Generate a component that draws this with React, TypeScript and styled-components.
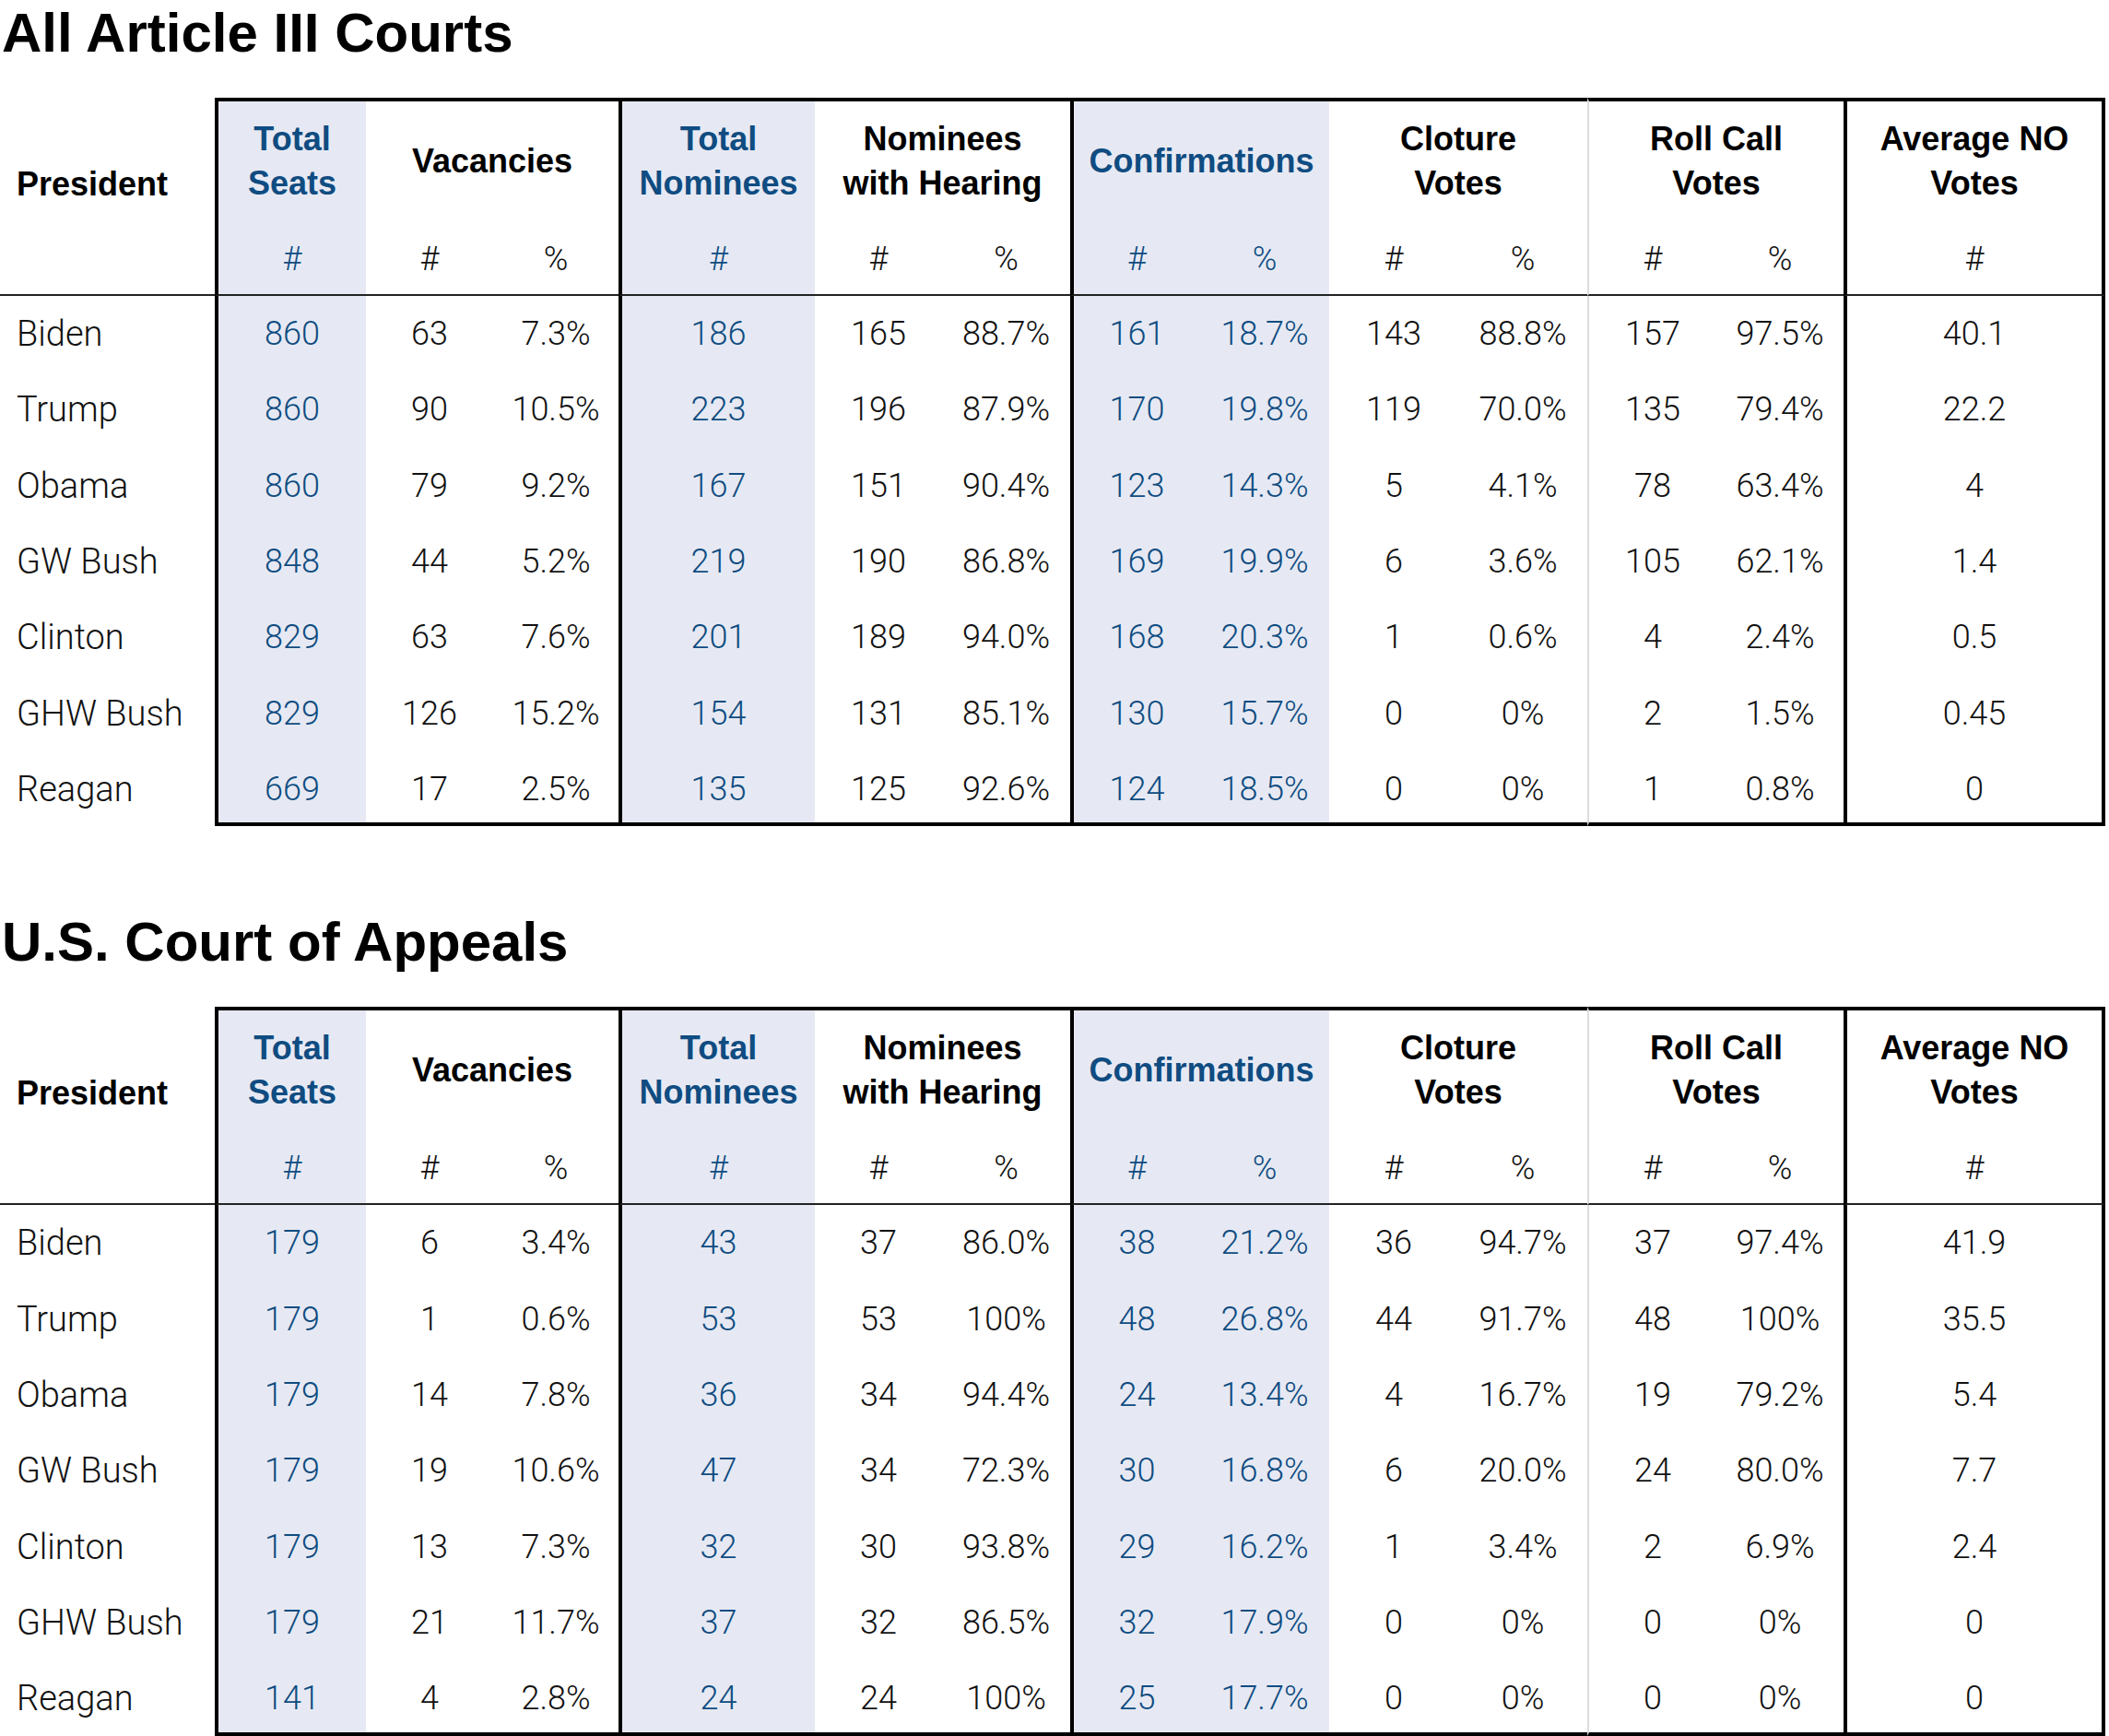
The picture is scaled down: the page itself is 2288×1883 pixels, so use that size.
import React from 'react'
import styled, { createGlobalStyle } from 'styled-components'

type Edge = 'thick' | 'light'

type Column = {
    shaded?: boolean
    edge?: Edge
    closing?: boolean
}

type Group = {
    label: string[]
    span: number
}

type Row = {
    name: string
    values: (string | number)[]
}

const COLUMNS: Column[] = [
    { shaded: true, edge: 'thick' },
    {},
    {},
    { shaded: true, edge: 'thick' },
    {},
    {},
    { shaded: true, edge: 'thick' },
    { shaded: true },
    {},
    {},
    { edge: 'light' },
    {},
    { edge: 'thick', closing: true },
]

const GROUPS: Group[] = [
    { label: ['Total', 'Seats'], span: 1 },
    { label: ['Vacancies'], span: 2 },
    { label: ['Total', 'Nominees'], span: 1 },
    { label: ['Nominees', 'with Hearing'], span: 2 },
    { label: ['Confirmations'], span: 2 },
    { label: ['Cloture', 'Votes'], span: 2 },
    { label: ['Roll Call', 'Votes'], span: 2 },
    { label: ['Average NO', 'Votes'], span: 1 },
]

const UNITS = ['#', '#', '%', '#', '#', '%', '#', '%', '#', '%', '#', '%', '#']

const ALL_COURTS: Row[] = [
    { name: 'Biden', values: [860, 63, '7.3%', 186, 165, '88.7%', 161, '18.7%', 143, '88.8%', 157, '97.5%', '40.1'] },
    { name: 'Trump', values: [860, 90, '10.5%', 223, 196, '87.9%', 170, '19.8%', 119, '70.0%', 135, '79.4%', '22.2'] },
    { name: 'Obama', values: [860, 79, '9.2%', 167, 151, '90.4%', 123, '14.3%', 5, '4.1%', 78, '63.4%', '4'] },
    { name: 'GW Bush', values: [848, 44, '5.2%', 219, 190, '86.8%', 169, '19.9%', 6, '3.6%', 105, '62.1%', '1.4'] },
    { name: 'Clinton', values: [829, 63, '7.6%', 201, 189, '94.0%', 168, '20.3%', 1, '0.6%', 4, '2.4%', '0.5'] },
    { name: 'GHW Bush', values: [829, 126, '15.2%', 154, 131, '85.1%', 130, '15.7%', 0, '0%', 2, '1.5%', '0.45'] },
    { name: 'Reagan', values: [669, 17, '2.5%', 135, 125, '92.6%', 124, '18.5%', 0, '0%', 1, '0.8%', '0'] },
]

const APPEALS: Row[] = [
    { name: 'Biden', values: [179, 6, '3.4%', 43, 37, '86.0%', 38, '21.2%', 36, '94.7%', 37, '97.4%', '41.9'] },
    { name: 'Trump', values: [179, 1, '0.6%', 53, 53, '100%', 48, '26.8%', 44, '91.7%', 48, '100%', '35.5'] },
    { name: 'Obama', values: [179, 14, '7.8%', 36, 34, '94.4%', 24, '13.4%', 4, '16.7%', 19, '79.2%', '5.4'] },
    { name: 'GW Bush', values: [179, 19, '10.6%', 47, 34, '72.3%', 30, '16.8%', 6, '20.0%', 24, '80.0%', '7.7'] },
    { name: 'Clinton', values: [179, 13, '7.3%', 32, 30, '93.8%', 29, '16.2%', 1, '3.4%', 2, '6.9%', '2.4'] },
    { name: 'GHW Bush', values: [179, 21, '11.7%', 37, 32, '86.5%', 32, '17.9%', 0, '0%', 0, '0%', '0'] },
    { name: 'Reagan', values: [141, 4, '2.8%', 24, 24, '100%', 25, '17.7%', 0, '0%', 0, '0%', '0'] },
]

// first column index of each group, so a group header takes its look from there
const groupStarts = GROUPS.reduce<number[]>((acc, g, i) => {
    acc.push(i === 0 ? 0 : acc[i - 1] + GROUPS[i - 1].span)
    return acc
}, [])

const CourtTable = ({ rows }: { rows: Row[] }) => {
    return (
        <Grid>
            <PresidentHead>President</PresidentHead>
            {GROUPS.map((g, i) => {
                const first = COLUMNS[groupStarts[i]]
                const last = COLUMNS[groupStarts[i] + g.span - 1]
                return (
                    <Cell
                        key={g.label.join()}
                        $span={g.span}
                        $shaded={first.shaded}
                        $edge={first.edge}
                        $closing={last.closing}
                        $top
                    >
                        <GroupLabel $blue={first.shaded}>
                            {g.label.map(line => <div key={line}>{line}</div>)}
                        </GroupLabel>
                    </Cell>
                )
            })}
            {UNITS.map((u, i) => (
                <Cell
                    key={'unit' + i}
                    $shaded={COLUMNS[i].shaded}
                    $edge={COLUMNS[i].edge}
                    $closing={COLUMNS[i].closing}
                    $rule="thin"
                >
                    <Unit $blue={COLUMNS[i].shaded}>{u}</Unit>
                </Cell>
            ))}
            {rows.map((row, r) => {
                const isLast = r === rows.length - 1
                return (
                    <React.Fragment key={row.name}>
                        <NameCell>{row.name}</NameCell>
                        {row.values.map((v, i) => (
                            <Cell
                                key={i}
                                $shaded={COLUMNS[i].shaded}
                                $edge={COLUMNS[i].edge}
                                $closing={COLUMNS[i].closing}
                                $rule={isLast ? 'thick' : undefined}
                            >
                                <Value $blue={COLUMNS[i].shaded}>{v}</Value>
                            </Cell>
                        ))}
                    </React.Fragment>
                )
            })}
        </Grid>
    )
}

const App = () => {
    return (
        <Page>
            <GlobalStyle />
            <Section>
                <Title>All Article III Courts</Title>
                <CourtTable rows={ALL_COURTS} />
            </Section>
            <Section>
                <Title>U.S. Court of Appeals</Title>
                <CourtTable rows={APPEALS} />
            </Section>
        </Page>
    )
}

export default App

const HEAD_FONT = `"Liberation Sans", Arial, sans-serif`
const BODY_FONT = `Roboto, "Liberation Sans", sans-serif`
const BLUE = '#0f4c81'
const SHADE = '#e6e9f3'

const GlobalStyle = createGlobalStyle`
    html, body {
        margin: 0;
        padding: 0;
        background: #fff;
    }
    body {
        width: 2288px;
        height: 1883px;
        overflow: hidden;
    }
`

const Page = styled.div`
    display: flex;
    flex-direction: column;
    gap: 90px;
    width: 2288px;
`

const Section = styled.section`
    display: flex;
    flex-direction: column;
    gap: 34px;
`

const Title = styled.h1`
    margin: 0;
    padding-left: 2px;
    font-family: ${HEAD_FONT};
    font-size: 60px;
    font-weight: 700;
    line-height: 72px;
    color: #000;
`

const Grid = styled.div`
    display: grid;
    grid-template-columns: 233px 164px 138px 136px 213px 138px 139px 141px 140px 140px 140px 140px 138px 284px;
    grid-template-rows: 131px 84px repeat(6, 82.3px) 81.5px;
`

const Cell = styled.div<{
    $span?: number
    $shaded?: boolean
    $edge?: Edge
    $closing?: boolean
    $top?: boolean
    $rule?: 'thin' | 'thick'
}>`
    box-sizing: border-box;
    grid-column: span ${p => p.$span ?? 1};
    display: flex;
    align-items: center;
    justify-content: center;
    text-align: center;
    padding-top: ${p => (p.$rule === 'thick' ? '4px' : '0')};
    background: ${p => (p.$shaded ? SHADE : '#fff')};
    border-left: ${p => (p.$edge === 'thick' ? '4px solid #000' : p.$edge === 'light' ? '2px solid #dcdcdc' : 'none')};
    border-right: ${p => (p.$closing ? '4px solid #000' : 'none')};
    border-top: ${p => (p.$top ? '4px solid #000' : 'none')};
    border-bottom: ${p => (p.$rule === 'thick' ? '4px solid #000' : p.$rule === 'thin' ? '2px solid #222' : 'none')};
`

const PresidentHead = styled.div`
    box-sizing: border-box;
    grid-row: span 2;
    padding: 70px 0 0 18px;
    border-bottom: 2px solid #222;
    font-family: ${HEAD_FONT};
    font-size: 36px;
    font-weight: 700;
    line-height: 48px;
    color: #000;
`

const GroupLabel = styled.div<{ $blue?: boolean }>`
    padding-top: 3px;
    font-family: ${HEAD_FONT};
    font-size: 36px;
    font-weight: 700;
    line-height: 48px;
    color: ${p => (p.$blue ? BLUE : '#000')};
    white-space: nowrap;
`

const Value = styled.div<{ $blue?: boolean }>`
    font-family: ${BODY_FONT};
    font-size: 36px;
    font-weight: 300;
    color: ${p => (p.$blue ? BLUE : '#111')};
`

const Unit = styled(Value)`
    padding-top: 5px;
`

const NameCell = styled.div`
    display: flex;
    align-items: center;
    padding-left: 18px;
    font-family: ${BODY_FONT};
    font-size: 38px;
    font-weight: 300;
    color: #111;
`
